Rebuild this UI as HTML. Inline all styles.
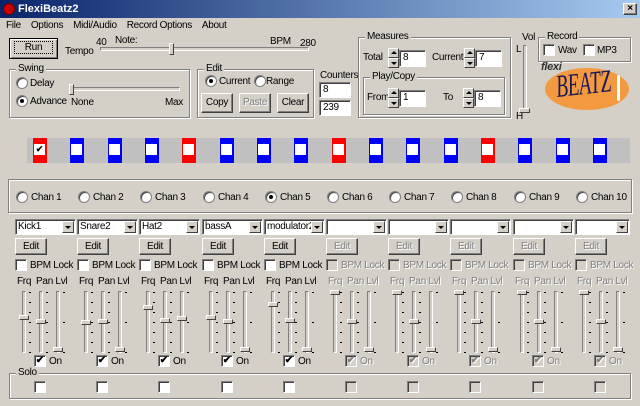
<!DOCTYPE html>
<html><head><meta charset="utf-8">
<style>
*{box-sizing:border-box}
body{margin:0;width:640px;height:406px;overflow:hidden;background:#d4d0c8;font-family:"Liberation Sans",sans-serif;font-size:10px;letter-spacing:-0.3px;color:#000;position:relative}
.a{position:absolute;white-space:nowrap}
.title{left:0;top:0;width:640px;height:18px;background:linear-gradient(90deg,#0a246a,#a6caf0);color:#fff;font-weight:bold;font-size:11px;letter-spacing:0;line-height:18px;padding-left:18px}
.btn{position:absolute;background:#d4d0c8;border:1px solid;border-color:#fff #404040 #404040 #fff;box-shadow:inset -1px -1px #808080;text-align:center;font-size:10px}
.inp{position:absolute;background:#fff;border:1px solid;border-color:#808080 #fff #fff #808080;box-shadow:inset 1px 1px #404040;font-size:10px;padding-left:3px;line-height:14px}
.grp{position:absolute;border:1px solid #808080;box-shadow:1px 1px #fff,inset 1px 1px #fff}
.gl{position:absolute;top:-7px;left:6px;background:#d4d0c8;padding:0 2px;font-size:10px}
.rad{position:absolute;width:12px;height:12px;border-radius:50%;background:#fff;border:1px solid #808080;box-shadow:inset 1px 1px #404040}
.rad.on::after{content:"";position:absolute;left:3px;top:3px;width:4px;height:4px;border-radius:50%;background:#000}
.chk{position:absolute;width:12px;height:12px;background:#fff;border:1px solid;border-color:#808080 #fff #fff #808080;box-shadow:inset 1px 1px #404040;font-size:10px;line-height:10px;text-align:center;font-weight:bold;letter-spacing:0}
.dis .chk{background:#d4d0c8;color:#808080}
.track{position:absolute;width:4px;border:1px solid;border-color:#808080 #fff #fff #808080}
.htrack{position:absolute;height:4px;border:1px solid;border-color:#808080 #fff #fff #808080}
.thumb{position:absolute;background:#d4d0c8;border:1px solid;border-color:#fff #404040 #404040 #fff}
.tick{position:absolute;width:2px;height:1px;background:#000}
.dd{position:absolute;height:16px;background:#fff;border:1px solid;border-color:#808080 #fff #fff #808080;box-shadow:inset 1px 1px #404040;font-size:10px;line-height:13px;padding-left:2px;overflow:hidden}
.dd b{position:absolute;right:1px;top:1px;width:12px;height:12px;background:#d4d0c8;border:1px solid;border-color:#fff #404040 #404040 #fff}
.dd b::after{content:"";position:absolute;left:2px;top:4px;border:3px solid transparent;border-top:3px solid #000;border-bottom:0}
.dis,.dis .btn{color:#808080;text-shadow:1px 1px #fff}
.spin{position:absolute;width:11px;height:20px}
.spin i{display:block;height:10px;background:#d4d0c8;border:1px solid;border-color:#fff #404040 #404040 #fff;position:relative}
.spin i.u::after{content:"";position:absolute;left:2px;top:2px;border:3px solid transparent;border-bottom:3px solid #000;border-top:0}
.spin i.d::after{content:"";position:absolute;left:2px;top:3px;border:3px solid transparent;border-top:3px solid #000;border-bottom:0}
</style></head><body>
<div class="a title">FlexiBeatz2</div>
<div class="a" style="left:3px;top:3px;width:12px;height:12px;border-radius:50%;background:#c00;border:1px solid #600"></div>
<div class="btn" style="left:623px;top:3px;width:14px;height:12px;font-size:10px;line-height:10px;font-weight:bold">×</div>
<div class="a" style="left:6px;top:20px">File&nbsp;&nbsp;&nbsp;&nbsp;Options&nbsp;&nbsp;&nbsp;&nbsp;Midi/Audio&nbsp;&nbsp;&nbsp;&nbsp;Record Options&nbsp;&nbsp;&nbsp;&nbsp;About</div>

<div class="btn" style="left:9px;top:38px;width:49px;height:21px;border:1px solid #000;line-height:18px;box-shadow:inset 1px 1px #fff,inset -1px -1px #808080"><span style="border:1px dotted #000;padding:0 10px">Run</span></div>
<div class="a" style="left:65px;top:46px">Tempo</div>
<div class="a" style="left:96px;top:37px">40</div>
<div class="a" style="left:115px;top:35px">Note:</div>
<div class="a" style="left:270px;top:36px">BPM</div>
<div class="a" style="left:300px;top:38px">280</div>
<div class="htrack" style="left:100px;top:47px;width:209px"></div>
<div class="thumb" style="left:169px;top:43px;width:5px;height:12px"></div>

<div class="grp" style="left:9px;top:69px;width:181px;height:49px"><span class="gl">Swing</span></div>
<div class="rad" style="left:16px;top:77px"></div><div class="a" style="left:30px;top:78px">Delay</div>
<div class="rad on" style="left:16px;top:95px"></div><div class="a" style="left:30px;top:96px">Advance</div>
<div class="htrack" style="left:70px;top:87px;width:110px"></div>
<div class="thumb" style="left:69px;top:84px;width:5px;height:11px"></div>
<div class="a" style="left:71px;top:97px">None</div>
<div class="a" style="left:165px;top:97px">Max</div>

<div class="grp" style="left:197px;top:69px;width:117px;height:49px"><span class="gl">Edit</span></div>
<div class="rad on" style="left:205px;top:75px"></div><div class="a" style="left:219px;top:76px">Current</div>
<div class="rad" style="left:254px;top:75px"></div><div class="a" style="left:266px;top:76px">Range</div>
<div class="btn" style="left:201px;top:93px;width:32px;height:20px;line-height:18px">Copy</div>
<div class="btn dis" style="left:239px;top:93px;width:32px;height:20px;line-height:18px">Paste</div>
<div class="btn" style="left:277px;top:93px;width:32px;height:20px;line-height:18px">Clear</div>

<div class="a" style="left:320px;top:70px">Counters</div>
<div class="inp" style="left:319px;top:82px;width:32px;height:16px">8</div>
<div class="inp" style="left:319px;top:100px;width:32px;height:16px">239</div>

<div class="grp" style="left:358px;top:37px;width:153px;height:81px"><span class="gl">Measures</span></div>
<div class="a" style="left:363px;top:52px">Total</div>
<div class="spin" style="left:388px;top:48px"><i class="u"></i><i class="d"></i></div>
<div class="inp" style="left:399px;top:50px;width:27px;height:17px">8</div>
<div class="a" style="left:432px;top:52px">Current</div>
<div class="spin" style="left:464px;top:48px"><i class="u"></i><i class="d"></i></div>
<div class="inp" style="left:475px;top:50px;width:27px;height:17px">7</div>
<div class="grp" style="left:363px;top:77px;width:142px;height:38px"><span class="gl">Play/Copy</span></div>
<div class="a" style="left:367px;top:92px">From</div>
<div class="spin" style="left:388px;top:88px"><i class="u"></i><i class="d"></i></div>
<div class="inp" style="left:399px;top:90px;width:27px;height:17px">1</div>
<div class="a" style="left:443px;top:92px">To</div>
<div class="spin" style="left:463px;top:88px"><i class="u"></i><i class="d"></i></div>
<div class="inp" style="left:474px;top:90px;width:27px;height:17px">8</div>

<div class="a" style="left:522px;top:32px">Vol</div>
<div class="a" style="left:516px;top:44px">L</div>
<div class="a" style="left:516px;top:111px">H</div>
<div class="track" style="left:523px;top:45px;height:67px"></div>
<div class="thumb" style="left:519px;top:108px;width:11px;height:5px"></div>

<div class="grp" style="left:538px;top:37px;width:93px;height:25px"><span class="gl">Record</span></div>
<div class="chk" style="left:543px;top:44px"></div><div class="a" style="left:558px;top:45px">Wav</div>
<div class="chk" style="left:583px;top:44px"></div><div class="a" style="left:597px;top:45px">MP3</div>

<div class="a" style="left:545px;top:68px;width:84px;height:42px;border-radius:50%;background:#f39a40"></div>
<div class="a" style="left:541px;top:61px;font-weight:bold;font-style:italic;font-size:11px;color:#333">flexi</div>
<div class="a" style="left:556px;top:68px;font-family:'Liberation Serif',serif;font-style:italic;font-size:32px;color:#1a1a5a;transform:rotate(-6deg) scaleX(.6);transform-origin:left">BEATZ</div>
<div class="a" style="left:617px;top:75px;width:3px;height:26px;background:#fff;border-radius:2px"></div>

<div class="a" style="left:27px;top:138px;width:603px;height:25px;background:#c0c0c0"></div>
<div id="beats"></div>

<div class="grp" style="left:8px;top:179px;width:624px;height:34px"></div>
<div id="chans"></div>

<div class="grp" style="left:9px;top:373px;width:622px;height:26px"><span class="gl">Solo</span></div>
<div id="cols"></div>

<script>
var b='';
for(var i=0;i<16;i++){var x=Math.round(33+i*37.33);var red=(i%4==0);
b+='<div class="a" style="left:'+x+'px;top:138px;width:14px;height:25px;background:'+(red?'#f00':'#00f')+'"></div>';
b+='<div class="chk" style="left:'+(x+1)+'px;top:144px;width:11px;height:11px;border:none;box-shadow:none;font-size:9px">'+(i==0?'✔':'')+'</div>';}
document.getElementById('beats').innerHTML=b;
var c='';
for(var i=0;i<10;i++){var x=Math.round(16+i*62.2);
c+='<div class="rad'+(i==4?' on':'')+'" style="left:'+x+'px;top:191px"></div><div class="a" style="left:'+(x+15)+'px;top:192px">Chan '+(i+1)+'</div>';}
document.getElementById('chans').innerHTML=c;
var names=['Kick1','Snare2','Hat2','bassA','modulator22','','','','',''];
var frq=[323,338,292,323,282,247,247,247,247,247],pan=[334,334,331,334,331,334,334,334,334,334],lvl=[417,417,325,417,417,417,417,417,417,417];
var s='';
for(var i=0;i<10;i++){var x=Math.round(15+i*62.2);var d=i>=5;
s+='<div class="'+(d?'dis':'')+'">';
s+='<div class="dd" style="left:'+x+'px;top:219px;width:'+(i==9?55:61)+'px">'+names[i]+'<b></b></div>';
s+='<div class="btn" style="left:'+x+'px;top:238px;width:32px;height:17px;line-height:15px">Edit</div>';
s+='<div class="chk" style="left:'+x+'px;top:259px"></div><div class="a" style="left:'+(x+15)+'px;top:260px">BPM Lock</div>';
s+='<div class="a" style="left:'+(x+2)+'px;top:276px">Frq&nbsp;&nbsp;Pan&nbsp;Lvl</div>';
var tx=[x+7,x+24,x+41],tp=[frq[i],pan[i],lvl[i]];
for(var k=0;k<3;k++){s+='<div class="track" style="left:'+tx[k]+'px;top:291px;height:62px"></div>';
for(var t=0;t<7;t++){if(k==2&&t%3)continue;s+='<div class="tick" style="left:'+(tx[k]+7)+'px;top:'+(292+t*10)+'px"></div>';}
var ty=Math.round(291+(tp[k]-250)/3);s+='<div class="thumb" style="left:'+(tx[k]-3)+'px;top:'+ty+'px;width:10px;height:5px"></div>';}
s+='<div class="chk" style="left:'+(x+19)+'px;top:355px">✔</div><div class="a" style="left:'+(x+34)+'px;top:356px">On</div>';
s+='<div class="chk" style="left:'+(x+19)+'px;top:381px"></div>';
s+='</div>';}
document.getElementById('cols').innerHTML=s;
</script>
</body></html>
